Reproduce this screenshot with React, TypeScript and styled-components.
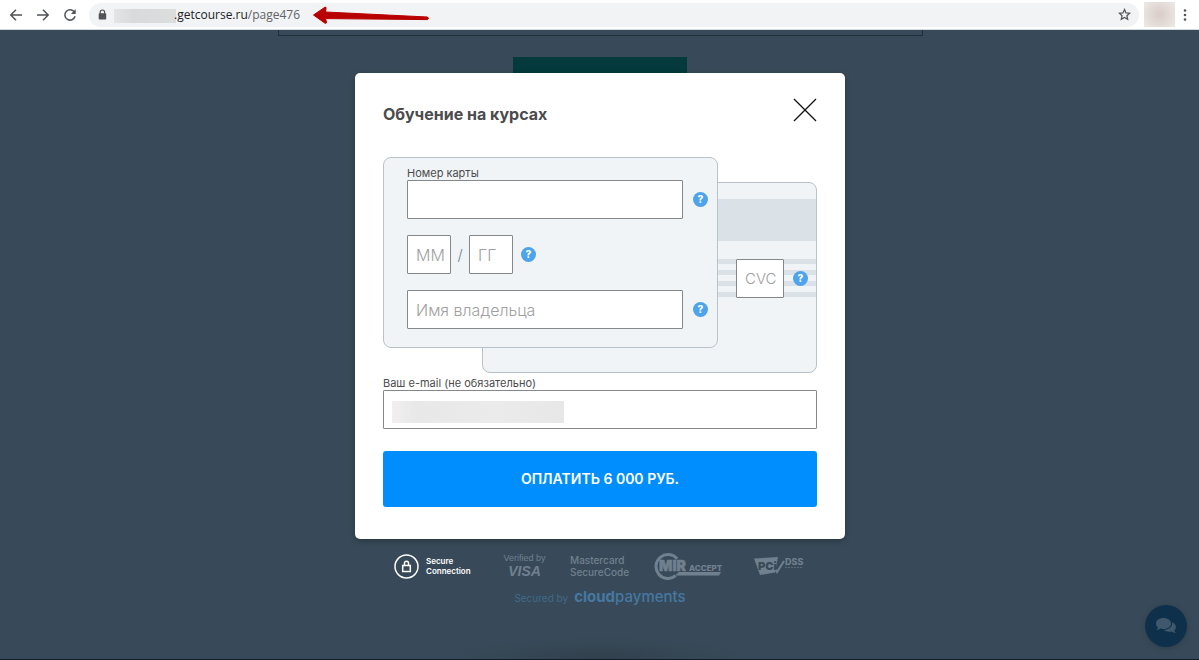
import React from 'react';
import styled, { createGlobalStyle } from 'styled-components';

const GlobalStyle = createGlobalStyle`
  *, *::before, *::after { box-sizing: border-box; }
  html, body { margin: 0; background: #384a59; }
  body, button, input { font-family: Inter, "Open Sans", sans-serif; }
  button { border: 0; padding: 0; background: none; cursor: pointer; }
  h2, p { margin: 0; }
`;

const Page = styled.div`
  display: flex;
  flex-direction: column;
  min-height: 100vh;
`;

const Toolbar = styled.header`
  position: relative;
  display: flex;
  align-items: center;
  height: 30px;
  padding: 0 7px 0 8px;
  background: #fff;
  border-bottom: 1px solid #d5dade;
`;

const ToolButton = styled.button`
  display: grid;
  place-items: center;
  width: 16px;
  height: 20px;
  margin-right: 11px;
`;

const AddressBar = styled.div`
  display: flex;
  flex: 1;
  align-items: center;
  height: 24px;
  padding: 0 8px 0 9px;
  border-radius: 12px;
  background: #f1f3f4;
  font-family: "Open Sans", sans-serif;
  font-size: 12px;
  line-height: 16px;
`;

const HiddenName = styled.span`
  width: 62px;
  height: 14px;
  margin: 3px 0 0 7px;
  background: linear-gradient(90deg, #e4e5e6, #d9dadb 30%, #dcdddd);
`;

const Host = styled.label`
  margin-left: -2px;
  color: #202124;
`;

const PathInput = styled.input`
  flex: 1;
  min-width: 0;
  padding: 0;
  border: 0;
  outline: 0;
  background: transparent;
  color: #5f6368;
  font-family: inherit;
  font-size: inherit;
  line-height: 16px;
`;

const Avatar = styled.span`
  width: 31px;
  height: 25px;
  margin: 0 3px 0 5px;
  background: radial-gradient(circle, #dccfca 10%, #e3dad6 50%, #ebe7e5 90%);
`;

const MenuButton = styled.button`
  display: grid;
  place-items: center;
  width: 14px;
  height: 20px;
`;

const Arrow = styled.svg`
  position: absolute;
  left: 312px;
  top: 6px;
`;

const Stage = styled.main`
  position: relative;
  display: flex;
  flex: 1;
  flex-direction: column;
  align-items: center;
  padding-left: 1px;
  background: radial-gradient(ellipse 150px 22px at 50% 100%, #31404d, transparent) #384a59;
  border-bottom: 1px solid #101c27;
`;

const PageFrame = styled.div`
  width: 100%;
  max-width: 645px;
  height: 6px;
  border: 1px solid #202e3a;
  border-top: 0;
`;

const PageButton = styled.div`
  width: 174px;
  height: 40px;
  margin-top: 21px;
  background: #043a3b;
`;

const Overlay = styled.div`
  position: absolute;
  inset: 0;
  display: flex;
  flex-direction: column;
  align-items: center;
  padding: 43px 0 0 1px;
`;

const Dialog = styled.section`
  width: 100%;
  max-width: 490px;
  padding: 24px 28px 32px;
  border-radius: 5px;
  background: #fff;
  box-shadow: 0 2px 6px rgba(0, 0, 0, 0.3);
`;

const DialogHeader = styled.div`
  display: flex;
  align-items: flex-start;
  justify-content: space-between;
  height: 60px;
`;

const Title = styled.h2`
  padding-top: 5px;
  color: #4b4b4d;
  font-size: 16px;
  font-weight: 700;
  line-height: 24px;
`;

const CloseButton = styled.button`
  width: 25px;
  height: 25px;
`;

const Cards = styled.div`
  display: grid;
  height: 216px;
`;

const Card = styled.div`
  grid-area: 1 / 1;
  width: 335px;
  height: 191px;
  border: 1px solid #b9c2c8;
  border-radius: 8px;
  background: #f0f4f7;
`;

const FrontCard = styled(Card)`
  position: relative;
  display: flex;
  flex-direction: column;
  padding: 8px 0 0 23px;
`;

const BackCard = styled(Card)`
  align-self: end;
  justify-self: end;
  padding-top: 16px;
`;

const MagneticStripe = styled.div`
  height: 42px;
  margin-bottom: 18px;
  background: #dae2e7;
`;

const SignatureRow = styled.div`
  display: flex;
  align-items: center;
  justify-content: flex-end;
  gap: 9px;
  height: 39px;
  padding-right: 8px;
  background: repeating-linear-gradient(#dae2e7 0 5px, transparent 5px 11px);
`;

const FieldRow = styled.div<{ $gap: number }>`
  display: flex;
  align-items: center;
  gap: ${(p) => p.$gap}px;
  & + & { margin-top: 16px; }
`;

const Label = styled.label`
  display: block;
  color: #4b4b4d;
  font-size: 11px;
  line-height: 14px;
`;

const Field = styled.input<{ $width?: number }>`
  display: block;
  width: ${(p) => (p.$width ? `${p.$width}px` : '100%')};
  height: 39px;
  padding: 0 0 0 8px;
  border: 1px solid #84888b;
  border-radius: 1px;
  outline: 0;
  background: #fff;
  color: #4b4b4d;
  font-size: 16px;
  font-weight: 300;
  &::placeholder { color: #a0a0a0; opacity: 1; }
`;

const CvcField = styled(Field)`
  font-size: 15px;
`;

const Slash = styled.span`
  width: 18px;
  color: #6d8496;
  font-size: 15px;
  font-weight: 300;
  line-height: 20px;
  text-align: center;
`;

const MonthYear = styled.div`
  display: flex;
  align-items: center;
`;

const HelpButton = styled.button`
  width: 15px;
  height: 15px;
  border-radius: 50%;
  background: #4da3ec;
  color: #fff;
  font-size: 10px;
  font-weight: 800;
  line-height: 15px;
  text-align: center;
`;

const EmailGroup = styled.div`
  position: relative;
  padding-top: 3px;
`;

const HiddenEmail = styled.span`
  position: absolute;
  left: 9px;
  bottom: 6px;
  width: 172px;
  height: 22px;
  background: linear-gradient(90deg, #f1eff0, #e8e8e8 15%, #ebebeb 60%, #e7e7e7);
`;

const PayButton = styled.button`
  width: 100%;
  height: 56px;
  margin-top: 22px;
  border-radius: 3px;
  background: #008eff;
  color: #fff;
  font-size: 14px;
  font-weight: 600;
  line-height: 20px;
`;

const Badges = styled.div`
  display: grid;
  grid-template-columns: 108px 68px 84px 100px 52px;
  align-items: center;
  height: 32px;
  margin-top: 11px;
  color: #70808f;
`;

const Secure = styled.div`
  display: flex;
  align-items: center;
  gap: 7px;
  color: #fff;
  font-size: 8px;
  font-weight: 600;
  line-height: 10px;
`;

const Verified = styled.div`
  width: 45px;
  font-family: "Liberation Sans", Arial, sans-serif;
  font-size: 9px;
  line-height: 10px;
  text-align: center;
  white-space: nowrap;
`;

const Visa = styled.strong`
  display: block;
  font-size: 14px;
  font-style: italic;
  font-weight: 700;
  line-height: 16px;
`;

const Mastercard = styled.div`
  font-size: 10px;
  font-weight: 500;
  line-height: 12px;
`;

const Secured = styled.p`
  display: flex;
  align-items: baseline;
  gap: 6px;
  margin-top: 6px;
  color: #416989;
  font-size: 10px;
  line-height: 18px;
`;

const CloudPayments = styled.a`
  color: #4678a2;
  font-size: 15px;
  font-weight: 500;
  text-decoration: none;
  b { font-weight: 700; }
`;

const ChatButton = styled.button`
  position: fixed;
  right: 12px;
  bottom: 13px;
  display: grid;
  place-items: center;
  width: 42px;
  height: 42px;
  border-radius: 50%;
  background: #0f304b;
  box-shadow: 0 1px 6px rgba(0, 0, 0, 0.2);
`;

function Help({ about }: { about: string }) {
  return <HelpButton type="button" aria-label={about}>?</HelpButton>;
}

function BrowserBar() {
  return (
    <Toolbar>
      <ToolButton aria-label="Назад">
        <svg width="14" height="14" viewBox="0 0 14 14" fill="none" stroke="#505357" strokeWidth="1.5">
          <path d="M13 7H2M7 1.8 1.8 7 7 12.2" />
        </svg>
      </ToolButton>
      <ToolButton aria-label="Вперёд">
        <svg width="14" height="14" viewBox="0 0 14 14" fill="none" stroke="#505357" strokeWidth="1.5">
          <path d="M1 7h11M7 1.8 12.2 7 7 12.2" />
        </svg>
      </ToolButton>
      <ToolButton aria-label="Обновить">
        <svg width="14" height="14" viewBox="0 0 14 14" fill="none" stroke="#505357" strokeWidth="1.5">
          <path d="M11.6 4.3A5.2 5.2 0 1 0 12.1 8.3" />
          <path d="M12.7 1v5H7.9z" fill="#505357" stroke="none" />
        </svg>
      </ToolButton>
      <AddressBar>
        <svg width="9" height="12" viewBox="0 0 9 12">
          <path d="M2.2 5V3.2a2.2 2.2 0 0 1 4.4 0V5" fill="none" stroke="#505357" strokeWidth="1.2" />
          <rect x="0.7" y="4.2" width="7.5" height="6.4" rx="0.8" fill="#505357" />
        </svg>
        <HiddenName />
        <Host htmlFor="path">.getcourse.ru</Host>
        <PathInput id="path" defaultValue="/page476" />
        <svg width="13" height="13" viewBox="0 0 13 13" fill="none" stroke="#505357" strokeWidth="1.2">
          <path d="m6.5 1.5 1.5 3.4 3.7.3-2.8 2.5.8 3.6-3.2-1.9-3.2 1.9.8-3.6L1.3 5.2 5 4.9z" />
        </svg>
      </AddressBar>
      <Avatar />
      <MenuButton aria-label="Меню">
        <svg width="4" height="14" viewBox="0 0 4 14" fill="#505357">
          <circle cx="2" cy="2.5" r="1.3" />
          <circle cx="2" cy="7" r="1.3" />
          <circle cx="2" cy="11.5" r="1.3" />
        </svg>
      </MenuButton>
      <Arrow width="118" height="20" viewBox="0 0 118 20">
        <path
          d="M1.5 9 13 1.2q1.5-.5 1 1.6L13.5 6 115.5 11q2 1.5 0 2.6L13.5 12.6 14.5 16q0 1.8-1.5 1.2z"
          fill="#b80000"
          stroke="#b80000"
          strokeLinejoin="round"
        />
      </Arrow>
    </Toolbar>
  );
}

function MirLogo() {
  return (
    <svg width="68" height="28" viewBox="0 0 68 28" fill="#70808f">
      <path d="M23.200 6.800A12 12 0 1 0 21.700 23.700" fill="none" stroke="#70808f" strokeWidth="3" />
      <path d="M25 20h42l-2 3.500H21z" />
      <text
        x="5"
        y="19"
        fontFamily="Inter, sans-serif"
        fontSize="14"
        fontWeight="900"
        stroke="#70808f"
        strokeWidth="0.5"
      >
        MIR
      </text>
      <text x="35" y="19" fontFamily="Inter, sans-serif" fontSize="8" fontWeight="800">ACCEPT</text>
    </svg>
  );
}

function PciLogo() {
  return (
    <svg width="52" height="20" viewBox="0 0 52 20" fill="#70808f">
      <path d="M0 2.5 24 1 21 16.5 6 19z" />
      <path d="m20 11 3 5 7-11" fill="none" stroke="#70808f" strokeWidth="2" />
      <text x="4" y="14" fontFamily="Inter, sans-serif" fontSize="11" fontWeight="900" fill="#384a59">PCi</text>
      <text x="31" y="9" fontFamily="Inter, sans-serif" fontSize="9" fontWeight="800">DSS</text>
      <path d="M31 11.5h18" stroke="#70808f" strokeOpacity="0.6" strokeDasharray="2 1" />
    </svg>
  );
}

export default function App() {
  return (
    <Page>
      <GlobalStyle />
      <BrowserBar />
      <Stage>
        <PageFrame />
        <PageButton />
        <Overlay>
          <Dialog role="dialog" aria-labelledby="title">
            <DialogHeader>
              <Title id="title">Обучение на курсах</Title>
              <CloseButton type="button" aria-label="Закрыть">
                <svg width="25" height="25" viewBox="0 0 25 25" fill="none" stroke="#111" strokeWidth="1.3">
                  <path d="m2 2 22 22M24 2 2 24" />
                </svg>
              </CloseButton>
            </DialogHeader>
            <Cards>
              <BackCard>
                <MagneticStripe />
                <SignatureRow>
                  <CvcField $width={48} placeholder="CVC" aria-label="CVC" />
                  <Help about="Что такое CVC" />
                </SignatureRow>
              </BackCard>
              <FrontCard>
                <Label htmlFor="card-number">Номер карты</Label>
                <FieldRow $gap={10}>
                  <Field $width={276} id="card-number" />
                  <Help about="О номере карты" />
                </FieldRow>
                <FieldRow $gap={8}>
                  <MonthYear>
                    <Field $width={44} placeholder="ММ" aria-label="Месяц" />
                    <Slash>/</Slash>
                    <Field $width={44} placeholder="ГГ" aria-label="Год" />
                  </MonthYear>
                  <Help about="О сроке действия" />
                </FieldRow>
                <FieldRow $gap={10}>
                  <Field $width={276} placeholder="Имя владельца" aria-label="Имя владельца" />
                  <Help about="Об имени владельца" />
                </FieldRow>
              </FrontCard>
            </Cards>
            <EmailGroup>
              <Label htmlFor="email">Ваш e-mail (не обязательно)</Label>
              <Field id="email" type="email" />
              <HiddenEmail />
            </EmailGroup>
            <PayButton type="submit">ОПЛАТИТЬ 6 000 РУБ.</PayButton>
          </Dialog>
          <Badges>
            <Secure>
              <svg width="25" height="25" viewBox="0 0 25 25" fill="none" stroke="#fff" strokeWidth="1.5">
                <circle cx="12.5" cy="12.5" r="11.5" />
                <rect x="8.7" y="11.5" width="7.6" height="6" />
                <path d="M10.5 11.5V9.3a2 2 0 0 1 4 0v2.2" />
              </svg>
              <span>Secure<br />Connection</span>
            </Secure>
            <Verified>Verified by<Visa>VISA</Visa></Verified>
            <Mastercard>Mastercard<br />SecureCode</Mastercard>
            <MirLogo />
            <PciLogo />
          </Badges>
          <Secured>
            Secured by <CloudPayments href="#"><b>cloud</b>payments</CloudPayments>
          </Secured>
        </Overlay>
      </Stage>
      <ChatButton type="button" aria-label="Чат">
        <svg width="22" height="18" viewBox="0 0 22 18" fill="#40586c">
          <path d="M8.5 1C4.2 1 1 3.4 1 6.500c0 1.700.8 3 2 4-.2 1-.8 1.700-1.700 2.300 1.700.1 3-.4 4-1.200 1 .3 2 .4 3.200.4 4.200 0 7.500-2.400 7.500-5.500S12.800 1 8.500 1z" />
          <path d="M17.200 5.300c.6 4.300-3.200 7.400-8.200 7.800 1.400 1.300 4.500 2.200 7.700 1.500 1.200.8 2.500 1.300 4.300 1.200-.9-.6-1.500-1.300-1.700-2.300 2.700-2.500 2-6.300-2.100-8.200z" />
        </svg>
      </ChatButton>
    </Page>
  );
}
